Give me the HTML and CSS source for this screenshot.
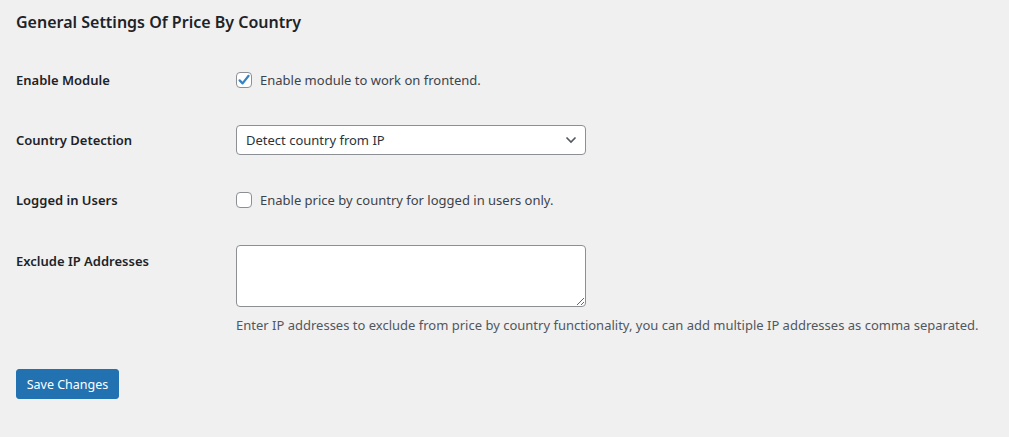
FILE: index.html
```html
<!DOCTYPE html>
<html lang="en">
<head>
  <meta charset="UTF-8" />
  <title>Price By Country – Settings</title>
  <link rel="stylesheet" href="styles.css">
</head>
<body>
  <div class="wrap">
    <h2 class="page-title">General Settings Of Price By Country</h2>
    <form class="settings">
      <div class="row">
        <div class="label">Enable Module</div>
        <div class="field">
          <label class="check">
            <input type="checkbox" checked>
            <span class="box"><svg viewBox="0 0 16 16" width="16" height="16"><path d="M3.6 8.4 L6.6 11.4 L12.6 3.8" fill="none" stroke="#3582c4" stroke-width="2.2" stroke-linecap="round" stroke-linejoin="round"/></svg></span>
            Enable module to work on frontend.
          </label>
        </div>
      </div>
      <div class="row">
        <div class="label">Country Detection</div>
        <div class="field">
          <div class="select">
            <span>Detect country from IP</span>
            <svg viewBox="0 0 12 8" width="12" height="8"><path d="M1.5 1.5 L6 6 L10.5 1.5" fill="none" stroke="#50575e" stroke-width="1.6"/></svg>
          </div>
        </div>
      </div>
      <div class="row">
        <div class="label">Logged in Users</div>
        <div class="field">
          <label class="check">
            <input type="checkbox">
            <span class="box"></span>
            Enable price by country for logged in users only.
          </label>
        </div>
      </div>
      <div class="row row-top">
        <div class="label">Exclude IP Addresses</div>
        <div class="field">
          <textarea class="ips"></textarea>
          <p class="desc">Enter IP addresses to exclude from price by country functionality, you can add multiple IP addresses as comma separated.</p>
        </div>
      </div>
      <button type="button" class="button-primary">Save Changes</button>
    </form>
  </div>
</body>
</html>
```

FILE: styles.css
```css
body {
  margin: 0;
  background: #f0f0f1;
  color: #3c434a;
  font-family: 'Noto Sans', 'Open Sans', sans-serif;
  font-size: 13px;
}
.wrap {
  padding: 0 16px;
}
.page-title {
  margin: 11px 0 0;
  font-size: 16px;
  line-height: 23px;
  font-weight: 600;
  color: #1d2327;
}
.settings {
  margin-top: 16px;
}
.row {
  display: grid;
  grid-template-columns: 220px 1fr;
  align-items: center;
  height: 60px;
}
.row-top {
  align-items: start;
  height: auto;
  padding-top: 15px;
}
.row-top .label {
  padding-top: 7px;
}
.label {
  font-size: 13px;
  font-weight: 600;
  color: #1d2327;
}
.check {
  display: flex;
  align-items: center;
  gap: 8px;
}
.check input {
  display: none;
}
.box {
  width: 14px;
  height: 14px;
  border: 1px solid #8c8f94;
  border-radius: 4px;
  background: #fff;
  position: relative;
}
.box svg {
  position: absolute;
  left: -1px;
  top: -1px;
}
.select {
  width: 350px;
  height: 30px;
  box-sizing: border-box;
  border: 1px solid #8c8f94;
  border-radius: 4px;
  background: #fff;
  display: flex;
  align-items: center;
  justify-content: space-between;
  padding: 0 8px 0 9px;
  color: #2c3338;
  font-size: 13px;
}
.ips {
  display: block;
  width: 350px;
  height: 62px;
  box-sizing: border-box;
  border: 1px solid #8c8f94;
  border-radius: 4px;
  background: #fff;
  margin: 0;
  font-family: inherit;
}
.desc {
  margin: 9px 0 0;
  line-height: 18px;
  color: #50575e;
}
.button-primary {
  margin-top: 35px;
  width: 103px;
  height: 30px;
  padding: 0;
  border: 1px solid #2271b1;
  border-radius: 3px;
  background: #2271b1;
  color: #fff;
  font-family: inherit;
  font-size: 12.5px;
  cursor: pointer;
}
```
